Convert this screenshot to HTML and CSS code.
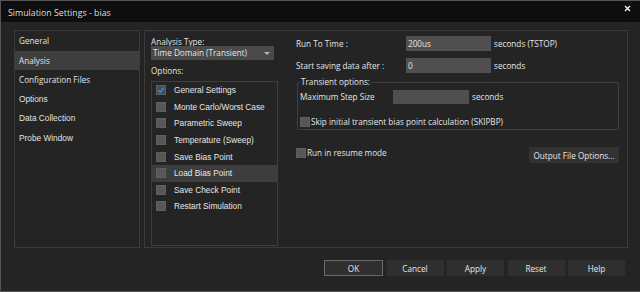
FILE: index.html
```html
<!DOCTYPE html>
<html lang="en">
<head>
    <meta charset="UTF-8">
    <title>Simulation Settings - bias</title>
    <link rel="stylesheet" href="styles.css">
</head>
<body>
    <div class="window">
        <!-- Title bar -->
        <div class="titlebar">
            <span class="title">Simulation Settings - bias</span>
            <svg class="close" width="7" height="7" viewBox="0 0 7 7">
                <path d="M1 1 L6 6 M6 1 L1 6" stroke="#f2f2f2" stroke-width="1.4"/>
            </svg>
        </div>

        <div class="content">
            <div class="main">
                <ul class="nav">
                    <li class="seg">General</li>
                    <li class="seg active">Analysis</li>
                    <li class="seg">Configuration Files</li>
                    <li>Options</li>
                    <li>Data Collection</li>
                    <li>Probe Window</li>
                </ul>

                <div class="panel">
                    <div class="col-type">
                        <div class="seg lbl">Analysis Type:</div>
                        <div class="seg select">Time Domain (Transient)<span class="arrow"></span></div>
                        <div class="seg lbl opts-lbl">Options:</div>
                        <ul class="options">
                            <li>
                                <span class="cb checked">
                                    <svg width="8" height="8" viewBox="0 0 8 8"><path d="M1.2 4.2 L3.2 6.2 L7 1.6" fill="none" stroke="#2a8cf0" stroke-width="1.4"/></svg>
                                </span>General Settings
                            </li>
                            <li><span class="cb"></span>Monte Carlo/Worst Case</li>
                            <li><span class="cb"></span>Parametric Sweep</li>
                            <li><span class="cb"></span>Temperature (Sweep)</li>
                            <li><span class="cb"></span>Save Bias Point</li>
                            <li class="sel"><span class="cb"></span>Load Bias Point</li>
                            <li><span class="cb"></span>Save Check Point</li>
                            <li><span class="cb"></span>Restart Simulation</li>
                        </ul>
                    </div>

                    <div class="col-settings seg">
                        <div class="field-row">
                            <span class="field-lbl">Run To Time :</span>
                            <span class="input">200us</span>
                            <span class="unit">seconds (TSTOP)</span>
                        </div>
                        <div class="field-row">
                            <span class="field-lbl">Start saving data after :</span>
                            <span class="input">0</span>
                            <span class="unit">seconds</span>
                        </div>

                        <fieldset class="group">
                            <legend>Transient options:</legend>
                            <div class="field-row">
                                <span class="step-lbl">Maximum Step Size</span>
                                <span class="input step"></span>
                                <span class="unit">seconds</span>
                            </div>
                            <div class="check-row skip-row">
                                <span class="cb"></span>Skip initial transient bias point calculation (SKIPBP)
                            </div>
                        </fieldset>

                        <div class="resume-row">
                            <div class="check-row">
                                <span class="cb"></span>Run in resume mode
                            </div>
                            <button class="btn">Output File Options...</button>
                        </div>
                    </div>
                </div>
            </div>

            <!-- Dialog buttons -->
            <div class="actions seg">
                <button class="action default">OK</button>
                <button class="action">Cancel</button>
                <button class="action">Apply</button>
                <button class="action">Reset</button>
                <button class="action">Help</button>
            </div>
        </div>
    </div>
</body>
</html>
```

FILE: styles.css
```css
* {
    margin: 0;
    padding: 0;
    box-sizing: border-box;
}

body {
    width: 640px;
    height: 292px;
    overflow: hidden;
    background: #232423;
    color: #e6e6e6;
    font-family: 'Liberation Sans', Arial, sans-serif;
    font-size: 8.3px;
}

.seg {
    font-family: 'Open Sans', 'Noto Sans', sans-serif;
    font-size: 8.2px;
}

.window {
    height: 292px;
    border: 1px solid #565656;
    border-right: 0;
    display: flex;
    flex-direction: column;
}

/* Title bar */
.titlebar {
    height: 21px;
    background: #0e0e0e;
    display: flex;
    justify-content: space-between;
    align-items: flex-start;
    padding: 0 9px 0 7px;
}

.title {
    font-family: 'Open Sans', 'Noto Sans', sans-serif;
    font-size: 8.8px;
    color: #dcdcdc;
    line-height: 12px;
    margin-top: 6px;
}

.close {
    margin-top: 4px;
}

.content {
    flex: 1;
    padding: 8px 12px 0 13px;
}

.main {
    display: flex;
    gap: 4px;
    height: 218px;
}

/* Left navigation */
.nav {
    width: 126px;
    border: 1px solid #3b3b3b;
    list-style: none;
}

.nav li {
    height: 19.5px;
    line-height: 19px;
    padding-left: 4px;
    color: #e2e2e2;
}

.nav li.active {
    background: #3e3e3e;
}

/* Analysis panel */
.panel {
    flex: 1;
    border: 1px solid #3b3b3b;
    display: flex;
    gap: 18px;
    padding: 0 0 1px 6px;
}

.col-type {
    width: 127px;
    display: flex;
    flex-direction: column;
    padding-top: 7px;
}

.lbl {
    line-height: 8px;
}

.select {
    position: relative;
    width: 123px;
    height: 14px;
    line-height: 14px;
    padding-left: 2px;
    background: #4a4a4a;
}

.arrow {
    position: absolute;
    right: 4px;
    top: 6px;
    border-left: 3px solid transparent;
    border-right: 3px solid transparent;
    border-top: 3px solid #b4b4b4;
}

.opts-lbl {
    margin-top: 6px;
    line-height: 10px;
}

.options {
    flex: 1;
    margin-top: 5px;
    border: 1px solid #3e3e3e;
    list-style: none;
}

.options li {
    height: 16.6px;
    display: flex;
    align-items: center;
    padding-left: 4px;
}

.options li.sel {
    background: #3d3d3d;
}

.cb {
    flex: none;
    width: 10px;
    height: 10px;
    background: #575757;
    border: 1px solid #606060;
    margin-right: 8px;
    display: flex;
    align-items: center;
    justify-content: center;
}

.cb.checked {
    background: #4e4e4e;
}

/* Settings column */
.col-settings {
    flex: 1;
    padding: 5px 8px 0 0;
}

.field-row {
    display: flex;
    align-items: center;
    height: 15px;
}

.field-row + .field-row {
    margin-top: 7px;
}

.field-lbl {
    width: 110px;
}

.input {
    width: 85px;
    height: 15px;
    line-height: 15px;
    padding-left: 2px;
    background: #4f4f4f;
}

.unit {
    margin-left: 3px;
}

.group {
    margin: 4px 0 0 1px;
    border: 1px solid #3f3f3f;
    border-radius: 2px;
    padding: 2px 2px 2px 2px;
}

.group legend {
    line-height: 10px;
    padding: 0 1px;
}

.step-lbl {
    width: 93px;
}

.input.step {
    width: 76px;
    height: 14px;
}

.check-row {
    display: flex;
    align-items: center;
}

.check-row .cb {
    margin-right: 1px;
}

.skip-row {
    margin-top: 12px;
}

.resume-row {
    display: flex;
    justify-content: space-between;
    align-items: flex-start;
    margin-top: 17px;
}

.btn,
.action {
    font: inherit;
    color: #e6e6e6;
    border: 0;
    height: 16px;
}

.btn {
    width: 90px;
    background: #323232;
}

/* Dialog buttons */
.actions {
    display: flex;
    justify-content: flex-end;
    gap: 3.5px;
    margin-top: 12px;
    padding-right: 3px;
}

.action {
    width: 57px;
    background: #2f2f2f;
}

.action.default {
    width: 59px;
    border: 1px solid #6a6a6a;
}
```
